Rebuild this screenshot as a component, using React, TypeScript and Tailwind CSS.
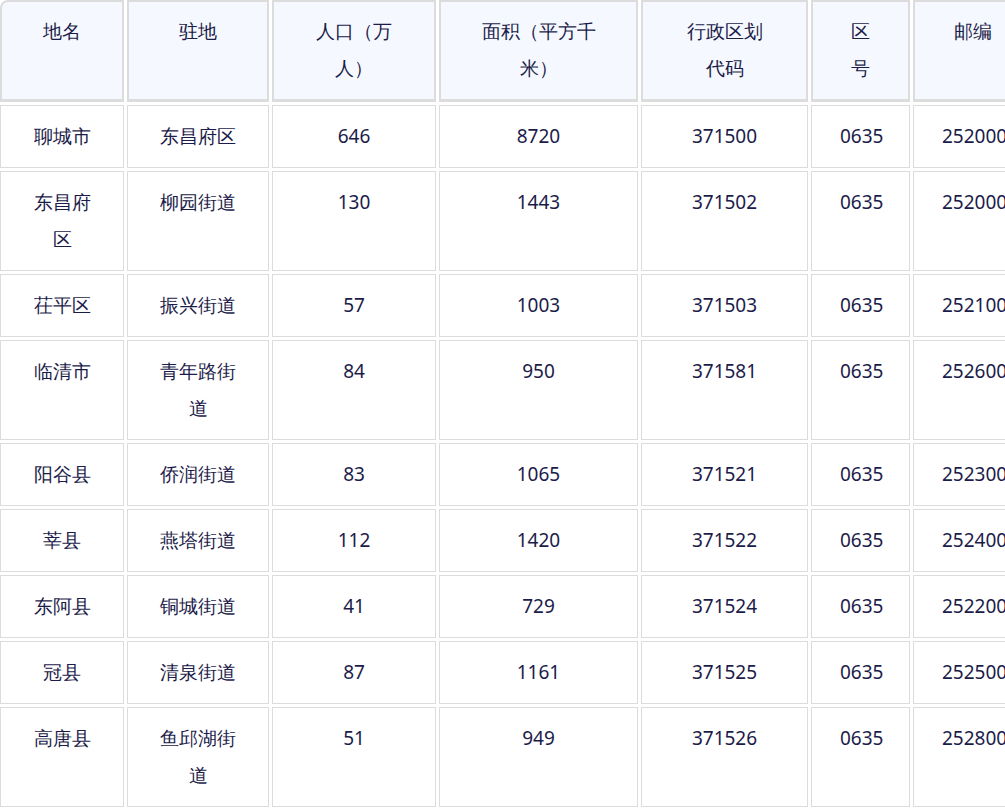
const rows = [
  ["聊城市","东昌府区","646","8720","371500","0635","252000"],
  ["东昌府区","柳园街道","130","1443","371502","0635","252000"],
  ["茌平区","振兴街道","57","1003","371503","0635","252100"],
  ["临清市","青年路街道","84","950","371581","0635","252600"],
  ["阳谷县","侨润街道","83","1065","371521","0635","252300"],
  ["莘县","燕塔街道","112","1420","371522","0635","252400"],
  ["东阿县","铜城街道","41","729","371524","0635","252200"],
  ["冠县","清泉街道","87","1161","371525","0635","252500"],
  ["高唐县","鱼邱湖街道","51","949","371526","0635","252800"],
];
const heads = ["地名","驻地","人口（万人）","面积（平方千米）","行政区划代码","区号","邮编"];
const colW = ["w-[124px]","w-[142px]","w-[164px]","w-[199px]","w-[167px]","w-[99px]","w-[119px]"];
export default function App() {
  return (
    <div className="w-[1005px] h-[808px] overflow-hidden bg-white font-['Noto_Sans_CJK_SC','Noto_Sans',sans-serif]">
      <table className="table-fixed w-[1017px] border-separate border-spacing-[3px] -ml-[3px] -mt-[3px] text-[19px] leading-[37px] text-[#1c1c4a]">
        <colgroup>{colW.map((w,i)=><col key={i} className={w} />)}</colgroup>
        <thead>
          <tr>
            {heads.map((h,i)=>(
              <th key={i} className={"h-[102px] align-top font-medium bg-[#f5f9ff] border-2 border-[#dcdcdc] border-b-[3px] px-[36px] pt-[11px] text-center " + (i===0?"rounded-tl-lg":"")}>{h}</th>
            ))}
          </tr>
        </thead>
        <tbody>
          {rows.map((r,ri)=>(
            <tr key={ri}>
              {r.map((c,ci)=>(
                <td key={ci} className="align-top border border-[#dcdcdc] px-[28px] pt-[12px] pb-[12px] text-center font-normal">{c}</td>
              ))}
            </tr>
          ))}
        </tbody>
      </table>
    </div>
  );
}
